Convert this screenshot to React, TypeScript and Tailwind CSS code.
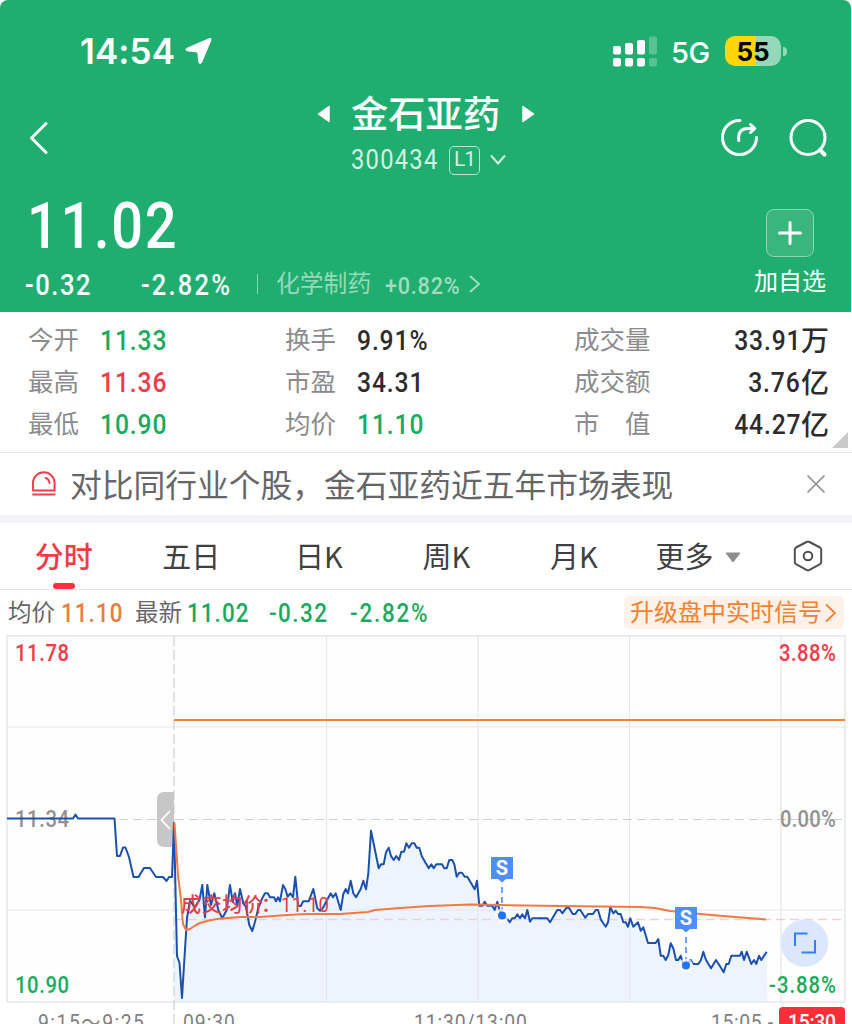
import React from "react";

const NUM = "font-['Roboto','Noto_Sans_CJK_SC',sans-serif] font-medium";
const NARROW = "inline-block origin-left scale-x-[0.88] whitespace-nowrap";

const GREEN = "#18ab5e";
const RED = "#f23a49";

type Pt = [number, number];

const pricePoints: Pt[] = [
  [7, 818.5], [73, 818.5], [75.5, 814.5], [78, 818.5], [114.5, 818.5], [117, 856], [120, 856], [123, 847.5], [125.5, 847.5],
  [129, 857], [133.5, 877], [138.5, 877], [144, 868], [150, 868], [156, 877], [163, 877], [166.5, 881], [169, 877], [172, 877],
  [174, 823], [177, 956], [179.5, 963], [182, 998], [184, 965], [187, 918], [190, 901], [195, 907], [199.5, 900],
];

const morning: Pt[] = [
  [7, 255], [15, 352], [22, 255], [33, 315], [43, 280], [55, 330], [67, 355], [80, 330], [90, 255], [98, 305], [105, 280],
  [112, 318], [120, 267], [130, 310], [138, 320], [148, 375], [157, 393], [165, 365], [175, 325], [185, 298], [195, 280],
  [203, 280], [210, 292], [222, 292], [228, 304], [234, 292], [240, 304], [249, 255], [256, 267], [263, 290], [271, 280],
  [279, 292], [286, 230], [295, 318], [302, 318], [310, 304], [326, 304], [340, 267], [352, 325], [360, 332], [368, 325],
  [392, 280], [399, 292], [407, 280], [422, 330], [430, 282], [437, 267], [444, 280], [452, 242], [460, 280], [468, 292],
  [482, 267], [490, 242], [498, 268], [505, 220], [513, 92], [536, 205], [543, 193], [551, 193], [558, 157], [566, 143],
  [573, 168], [581, 180], [589, 168], [597, 180], [604, 155], [612, 155], [619, 130], [627, 143], [635, 130], [643, 130],
  [650, 143], [658, 143], [665, 168], [686, 205], [694, 193], [701, 205], [709, 193], [726, 193], [733, 205], [740, 205],
  [748, 180], [757, 180], [763, 193], [770, 230], [778, 218], [786, 218], [794, 230], [802, 230], [824, 268], [831, 242],
  [838, 317], [847, 317], [854, 305], [862, 317], [877, 317], [884, 330], [892, 305], [900, 335], [906, 345], [921, 355],
  [929, 367], [937, 355], [944, 355], [952, 343], [960, 355], [967, 343], [975, 355],
];

const afternoon: Pt[] = [
  [22, 210], [30, 245], [37, 235], [82, 235], [90, 247], [112, 210], [120, 210], [127, 220], [140, 202], [148, 205],
  [158, 222], [166, 222], [174, 210], [181, 210], [196, 233], [204, 222], [219, 222], [227, 210], [234, 210], [243, 240],
  [257, 260], [264, 247], [271, 202], [280, 220], [287, 212], [294, 222], [302, 222], [310, 247], [317, 247], [324, 260],
  [331, 235], [340, 260], [354, 247], [362, 272], [370, 262], [384, 309], [407, 309], [415, 297], [422, 347], [430, 347],
  [437, 360], [445, 345], [452, 310], [460, 325], [468, 360], [475, 360], [482, 347], [490, 372], [497, 376], [512, 360],
  [520, 372], [535, 372], [543, 360], [550, 335], [558, 360], [573, 385], [588, 360], [604, 385], [611, 397], [619, 372],
  [626, 372], [634, 347], [660, 347], [665, 335], [672, 360], [680, 335], [694, 372], [702, 360], [709, 372], [717, 347],
  [724, 360], [740, 335],
];

const averagePoints: Pt[] = [
  [174.5, 823], [178, 875], [181, 900], [183, 924], [186, 930], [190, 929], [196, 925], [200, 923], [207, 921], [217, 919],
  [228, 918], [240, 917], [260, 917], [280, 915.5], [305, 914], [340, 914], [368, 912], [375, 910], [400, 908], [430, 906],
  [470, 904.5], [500, 905], [560, 906], [600, 906.5], [640, 907], [655, 908], [670, 911], [700, 914], [735, 917], [766, 919.5],
];

const scaled = (pts: Pt[], ox: number, oy: number): Pt[] => pts.map(([x, y]) => [ox + x / 3, oy + y / 3]);
const join = (pts: Pt[]) => pts.map(([x, y]) => `${x.toFixed(1)},${y.toFixed(1)}`).join(" ");

const fullPrice: Pt[] = [...pricePoints, ...scaled(morning, 200, 800), ...scaled(afternoon, 520, 840)];
const session = fullPrice.slice(19);

function StatusBar() {
  return (
    <div className="flex h-[90px] items-center pt-3 pl-[80px] text-white">
      <span className="w-[106px] font-['Inter',sans-serif] text-[35px] leading-none font-semibold tracking-[0.1px]">14:54</span>
      <svg width="28" height="28" viewBox="0 0 28 28" className="-mt-px -ml-px">
        <path d="M24.5 1.5 L2 11.200 Q-.6 13 2 13.800 L11 14.800 Q12.800 15 12.900 16.600 L13.800 25.200 Q14.600 28 16.600 25.400 L26 3 Q26.600 .9 24.500 1.500Z" fill="#fff" stroke="#fff" strokeWidth="1" strokeLinejoin="round" />
      </svg>
      <svg width="46" height="32" viewBox="0 0 46 32" className="ml-[399px]">
        <g fill="#fff">
          <rect x="1" y="11" width="8" height="8.500" rx="2" />
          <rect x="13" y="8" width="8" height="11.500" rx="2" />
          <rect x="25" y="5" width="8" height="14.500" rx="2" />
          <rect x="1" y="23" width="8" height="8.500" rx="2" />
          <rect x="13" y="23" width="8" height="8.500" rx="2" />
          <rect x="25" y="23" width="8" height="8.500" rx="2" />
        </g>
        <g fill="#fff" opacity=".25">
          <rect x="37" y="1.500" width="8" height="18" rx="2" />
          <rect x="37" y="23" width="8" height="8.500" rx="2" />
        </g>
      </svg>
      <span className="ml-[13px] w-[54px] pt-0.5 font-['Inter',sans-serif] text-[29px] leading-none font-medium tracking-[-0.5px]">5G</span>
      <div className="flex h-[30px] w-14 items-center justify-center rounded-[10px] bg-[linear-gradient(90deg,#ffd60a_0_55%,#94d8b8_55%)] font-['Inter',sans-serif] text-[26px] font-bold text-black">
        55
      </div>
      <div className="ml-[2px] h-[9px] w-[4px] rounded-r-full bg-[#94d8b8]" />
    </div>
  );
}

function TitleBar() {
  return (
    <div className="flex h-24 items-center text-white">
      <svg width="24" height="36" viewBox="0 0 24 36" className="ml-[28px]" fill="none" stroke="#fff" strokeWidth="3" strokeLinecap="round" strokeLinejoin="round">
        <path d="M18 3.500 L3.500 18 L18 32.500" />
      </svg>
      <div className="ml-[265px] flex h-24 w-[218px] flex-col">
        <div className="flex h-12 items-center">
          <svg width="14" height="20" viewBox="0 0 14 20"><path d="M1.500 10 L12 2.500 V17.500Z" fill="#fff" stroke="#fff" strokeWidth="1.500" strokeLinejoin="round" /></svg>
          <span className="-mt-1 ml-[20px] w-[156px] font-['Noto_Sans_CJK_SC',sans-serif] text-[37.300px] leading-[44px] font-medium whitespace-nowrap">金石亚药</span>
          <svg width="14" height="20" viewBox="0 0 14 20" className="ml-[14px]"><path d="M12.500 10 L2 2.500 V17.500Z" fill="#fff" stroke="#fff" strokeWidth="1.500" strokeLinejoin="round" /></svg>
        </div>
        <div className="flex h-11 items-center pl-[34px]">
          <span className="w-[98px] shrink-0"><span className={`${NARROW} pt-0.5 font-['Roboto',sans-serif] text-[27px] leading-none tracking-[1.4px] text-[#d5f0e2]`}>300434</span></span>
          <span className="flex h-[29px] w-[31px] shrink-0 items-center justify-center rounded-[5px] border border-[#b9e5ce] font-['Roboto',sans-serif] text-[21px] tracking-[-1px] text-[#d5f0e2]">L1</span>
          <svg width="18" height="12" viewBox="0 0 18 12" className="ml-[9px] shrink-0" fill="none" stroke="#d5f0e2" strokeWidth="2"><path d="M2 1.500 L9 9.500 L16 1.500" /></svg>
        </div>
      </div>
      <svg width="40" height="40" viewBox="0 0 40 40" className="ml-[185px] shrink-0" fill="none" stroke="#fff" strokeWidth="3" strokeLinecap="round" strokeLinejoin="round">
        <path d="M20 2.500 A17 17 0 1 0 36.500 19.500" />
        <path d="M18.700 22.500 V19 Q19 10.500 28 10.500 H34" />
        <path d="M30.500 6.500 L34.800 10.500 L30.500 14.500" />
      </svg>
      <svg width="40" height="40" viewBox="0 0 40 40" className="ml-7 shrink-0" fill="none" stroke="#fff" strokeWidth="3" strokeLinecap="round">
        <circle cx="20" cy="19.500" r="17" />
        <path d="M32 32 L36.500 36.500" strokeWidth="4" />
      </svg>
    </div>
  );
}

function PriceBlock() {
  return (
    <div className="flex h-[126px] text-white">
      <div className="w-[720px]">
        <div className="h-[78px] pl-[27px]">
          <span className={`${NUM} inline-block origin-left scale-x-[0.86] text-[65px] leading-[80px] tracking-[2px]`}>11.02</span>
        </div>
        <div className="flex h-10 items-center text-[29px] leading-[42px]">
          <span className="w-[115px] pl-[25px]"><span className={`${NUM} ${NARROW} tracking-[1.800px]`}>-0.32</span></span>
          <span className="w-[142px] pl-[26px]"><span className={`${NUM} ${NARROW} tracking-[2.500px]`}>-2.82%</span></span>
          <span className="h-5 w-px bg-[#8ad3ae]" />
          <span className="-mt-1 ml-[18px] w-[109px] font-['Noto_Sans_CJK_SC',sans-serif] text-[23.800px] text-[#97d9b7]">化学制药</span>
          <span className="w-[82px]"><span className={`${NARROW} font-['Roboto',sans-serif] text-[24.500px] font-medium tracking-[0.900px] text-[#a0dcbe]`}>+0.82%</span></span>
          <svg width="14" height="20" viewBox="0 0 14 20" className="ml-px" fill="none" stroke="#a5dec1" strokeWidth="1.800"><path d="M2 2 L11 10 L2 18" /></svg>
        </div>
      </div>
      <div className="flex flex-1 flex-col items-center pl-[9px] pt-[23px]">
        <div className="flex size-12 items-center justify-center rounded-[8px] border border-[#8fd5b1] bg-[#38b67c]">
          <svg width="26" height="26" viewBox="0 0 26 26" stroke="#fff" strokeWidth="3" strokeLinecap="round"><path d="M13 2.500 V23.500 M2.500 13 H23.500" /></svg>
        </div>
        <span className="mt-[3px] font-['Noto_Sans_CJK_SC',sans-serif] text-[24px] leading-10">加自选</span>
      </div>
    </div>
  );
}

const stats = [
  ["今开", "11.33", "text-[#18ab5e]", "换手", "9.91%", "text-[#2c2c2e]", "成交量", "33.91", "万"],
  ["最高", "11.36", "text-[#f23a49]", "市盈", "34.31", "text-[#2c2c2e]", "成交额", "3.76", "亿"],
  ["最低", "10.90", "text-[#18ab5e]", "均价", "11.10", "text-[#18ab5e]", "市　值", "44.27", "亿"],
];

function Stats() {
  const label = "font-['Noto_Sans_CJK_SC',sans-serif] text-[25.500px] text-[#8b8b8d] leading-[36px] h-[42px]";
  const value = `${NUM} ${NARROW} text-[28px] leading-[44px] tracking-[1px]`;
  return (
    <div className="relative h-[141px] border-b border-[#ebebeb] pt-2">
      {stats.map((r) => (
        <div key={r[0]} className="flex h-[42px] items-center">
          <span className={`${label} w-[100px] pl-[28px]`}>{r[0]}</span>
          <span className="w-[185px]"><span className={`${value} ${r[2]}`}>{r[1]}</span></span>
          <span className={`${label} w-[72px]`}>{r[3]}</span>
          <span className="w-[217px]"><span className={`${value} ${r[5]}`}>{r[4]}</span></span>
          <span className={`${label} w-20`}>{r[6]}</span>
          <span className="flex w-[175px] items-center justify-end text-[#2c2c2e]">
            <span className={`${NUM} inline-block origin-right scale-x-[0.88] text-[28px] leading-[44px] tracking-[1px]`}>{r[7]}</span>
            <span className="h-[42px] font-['Noto_Sans_CJK_SC',sans-serif] text-[28px] leading-[39px] font-medium">{r[8]}</span>
          </span>
        </div>
      ))}
      <svg width="16" height="16" viewBox="0 0 16 16" className="absolute right-[4px] bottom-[4px]"><path d="M16 0 V16 H0Z" fill="#c9c9c9" /></svg>
    </div>
  );
}

function Notice() {
  return (
    <div className="flex h-[70px] items-center border-b-[8px] border-[#f2f3f8] pl-[31px]">
      <svg width="26" height="26" viewBox="0 0 26 26" className="shrink-0" fill="none" stroke={RED} strokeWidth="1.900" strokeLinecap="round" strokeLinejoin="round">
        <path d="M2 19.500 V12 A10.800 10.800 0 0 1 23.600 12 V19.500Z" />
        <path d="M14.500 7 Q18 8 18.500 12" />
        <path d="M2 23.500 H23.600" />
      </svg>
      <span className="-mt-0.5 ml-[13px] w-[736px] font-['Noto_Sans_CJK_SC',sans-serif] text-[31.750px] leading-[56px] whitespace-nowrap text-[#666668]">
        对比同行业个股，金石亚药近五年市场表现
      </span>
      <svg width="20" height="20" viewBox="0 0 20 20" className="shrink-0" stroke="#8c8c8c" strokeWidth="1.600"><path d="M1.500 1.500 L18.500 18.500 M18.500 1.500 L1.500 18.500" /></svg>
    </div>
  );
}

function Tabs() {
  return (
    <div className="flex h-[67px] items-stretch border-b border-[#e4e4e4] font-['Noto_Sans_CJK_SC',sans-serif] text-[29px] leading-[65px] text-[#404042]">
      <div className="flex w-[127.500px] flex-col items-center font-medium text-[#f23a49]">
        <span className="h-[60px]">分时</span>
        <span className="h-1.5 w-[22px] rounded-[3px] bg-[#f9303f]" />
      </div>
      {["五日", "日K", "周K", "月K"].map((t) => (
        <div key={t} className="w-[127.500px] text-center">{t}</div>
      ))}
      <div className="ml-[18px] w-[70px]">更多</div>
      <svg width="16" height="11" viewBox="0 0 16 11" className="mt-[29px] -ml-px"><path d="M1 1 H15 L8 10Z" fill="#8e8e8e" stroke="#8e8e8e" strokeLinejoin="round" /></svg>
      <svg width="32" height="34" viewBox="0 0 32 34" className="mt-4 ml-[51px]" fill="none" stroke="#4f4f51" strokeWidth="2" strokeLinejoin="round">
        <path d="M14.500 3 Q16 2.200 17.500 3 L28 8.500 Q29.200 9.200 29.200 10.600 V23 Q29.200 24.400 28 25.100 L17.500 30.800 Q16 31.600 14.500 30.800 L4 25.100 Q2.800 24.400 2.800 23 V10.600 Q2.800 9.200 4 8.500Z" />
        <circle cx="16" cy="17" r="4.300" />
      </svg>
    </div>
  );
}

function InfoRow() {
  const cjk = "font-['Noto_Sans_CJK_SC',sans-serif] text-[23.500px] text-[#666668] leading-[40px] h-[44px]";
  const num = `${NUM} ${NARROW} text-[25.500px] leading-[48px]`;
  return (
    <div className="flex h-[45px] items-center">
      <span className={`${cjk} w-[61px] pl-[8px]`}>均价</span>
      <span className="w-[74px]"><span className={`${num} tracking-[1.200px] text-[#ea7c43]`}>11.10</span></span>
      <span className={`${cjk} w-[52px]`}>最新</span>
      <span className="w-[82px]"><span className={`${num} tracking-[1.200px] text-[#18ab5e]`}>11.02</span></span>
      <span className="w-[81px]"><span className={`${num} tracking-[1.700px] text-[#18ab5e]`}>-0.32</span></span>
      <span className="w-[274px]"><span className={`${num} tracking-[2px] text-[#18ab5e]`}>-2.82%</span></span>
      <div className="flex h-[33px] w-[220px] items-center rounded-[5px] bg-[#fdf2e9] pl-[6px]">
        <span className="-mt-1 w-[194px] font-['Noto_Sans_CJK_SC',sans-serif] text-[24px] leading-[32px] whitespace-nowrap text-[#f28130]">升级盘中实时信号</span>
        <svg width="13" height="20" viewBox="0 0 13 20" fill="none" stroke="#f28130" strokeWidth="1.800"><path d="M2 1.500 L11 10 L2 18.500" /></svg>
      </div>
    </div>
  );
}

interface LabelProps {
  x: number;
  y: number;
  w: number;
  fill: string;
  size?: number;
  regular?: boolean;
  children: string;
}

function Label({ x, y, w, fill, size = 23, regular = false, children }: LabelProps) {
  return (
    <text
      transform={`translate(${x} ${y}) scale(0.88 1)`}
      textLength={w / 0.88}
      fontSize={size}
      fill={fill}
      className={regular ? "font-['Roboto','Noto_Sans_CJK_SC',sans-serif]" : NUM}
    >
      {children}
    </text>
  );
}

function Signal({ x, top, dot }: { x: number; top: number; dot: number }) {
  return (
    <g>
      <line x1={x} x2={x} y1={top + 30} y2={dot - 4} stroke="#6ea0f5" strokeWidth="2" strokeDasharray="6 4" />
      <circle cx={x} cy={dot} r="7" fill="#fff" opacity=".7" />
      <circle cx={x} cy={dot} r="4" fill="#1f74fb" />
      <path d={`M${x - 11} ${top} h22 v22 h-7 l-4 3.500 l-4 -3.500 h-7Z`} fill="#4c8ffa" />
      <text x={x} y={top + 18} textAnchor="middle" fontSize="20" fill="#fff" className="font-['Roboto',sans-serif] font-bold">S</text>
    </g>
  );
}

function Chart() {
  return (
    <svg width="852" height="389" viewBox="0 635 852 389" className="block">
      <rect x="7" y="636" width="838" height="366" fill="#fefefe" />
      <polygon points={`174,1001 ${join(session)} 767.500,1001`} fill="#edf4fe" />
      <g stroke="#e6e7e9" strokeWidth="1.500" fill="none">
        <rect x="7" y="635.800" width="838" height="366.200" />
        <path d="M7 727H845 M7 910H845 M326.500 636V1002 M478 636V1002 M629.500 636V1002 M781 636V1002" strokeWidth="1.200" />
      </g>
      <line x1="174" x2="174" y1="636" y2="1024" stroke="#d6d9dd" strokeWidth="1.500" strokeDasharray="10 4" />
      <line x1="119" x2="845" y1="819.500" y2="819.500" stroke="#c6d2d8" strokeWidth="1.200" strokeDasharray="9 5" />
      <line x1="174" x2="845" y1="919.500" y2="919.500" stroke="#f5cdd4" strokeWidth="1.500" strokeDasharray="9 5" />
      <line x1="174" x2="845" y1="720" y2="720" stroke="#f28438" strokeWidth="2" />

      <Label x={15} y={661} w={54} fill={RED}>11.78</Label>
      <Label x={779} y={661} w={57} fill={RED}>3.88%</Label>
      <Label x={15} y={827} w={54} fill="#929292">11.34</Label>
      <Label x={780} y={827} w={56} fill="#929292">0.00%</Label>
      <Label x={15} y={993} w={54} fill={GREEN}>10.90</Label>
      <Label x={769} y={993} w={67} fill={GREEN}>-3.88%</Label>

      <path d="M174 792 H164 Q157 792 157 800 V839 Q157 847 164 847 H174Z" fill="#c7c7c7" />
      <path d="M170 811 L161.500 820 L170 829" fill="none" stroke="#fff" strokeWidth="1.800" />

      <polyline points={join(fullPrice)} fill="none" stroke="#1c50ae" strokeWidth="2" strokeLinejoin="round" />
      <polyline points={join(averagePoints)} fill="none" stroke="#f27a42" strokeWidth="2" strokeLinejoin="round" />
      <text x="181" y="911.500" fontSize="20" textLength="82" fill="#de3f4c" className="font-['Noto_Sans_CJK_SC',sans-serif] font-medium">成交均价</text>
      <text x="261" y="911.500" fontSize="20" fill="#de3f4c" className="font-['Noto_Sans_CJK_SC',sans-serif] font-medium">：</text>
      <Label x={281} y={912} w={48} size={21} regular fill="#de3f4c">11.10</Label>

      <Signal x={502} top={857} dot={915.5} />
      <Signal x={686} top={907} dot={965.5} />

      <circle cx="804.500" cy="943" r="23.700" fill="#dbe7fc" />
      <path d="M807.500 933.500 H795 V946 M801.500 952.500 H815 V940" fill="none" stroke="#3c7cf0" strokeWidth="2" />

      <Label x={38} y={1030} w={106} size={22} regular fill="#808080">9:15～9:25</Label>
      <Label x={183} y={1030} w={52} size={22} regular fill="#808080">09:30</Label>
      <Label x={414} y={1030} w={113} size={22} regular fill="#808080">11:30/13:00</Label>
      <Label x={711} y={1030} w={62} size={22} regular fill="#808080">15:05 -</Label>
      <rect x="779" y="1007" width="66" height="24" rx="4" fill="#fb2e38" />
      <Label x={788} y={1030} w={48} size={22} fill="#fff">15:30</Label>
    </svg>
  );
}

export default function App() {
  return (
    <div className="h-[1024px] w-[852px] overflow-hidden bg-white">
      <header className="h-[312px] w-[851px] rounded-t-[8px] bg-[#20ae70]">
        <StatusBar />
        <TitleBar />
        <PriceBlock />
      </header>
      <Stats />
      <Notice />
      <Tabs />
      <InfoRow />
      <Chart />
    </div>
  );
}
